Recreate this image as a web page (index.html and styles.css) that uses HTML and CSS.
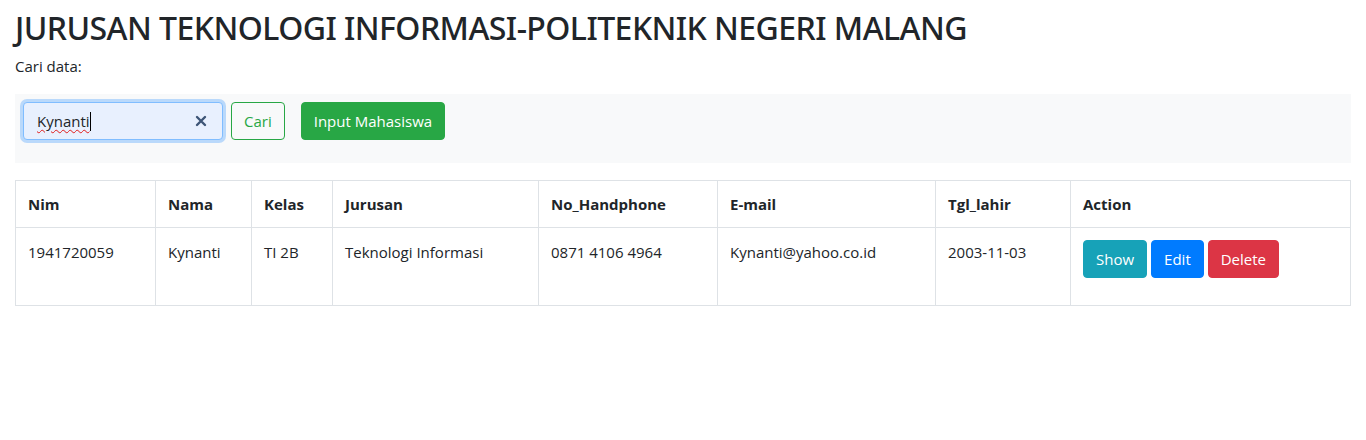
FILE: index.html
```html
<!DOCTYPE html>
<html lang="id">
<head>
<meta charset="utf-8">
<title>Mahasiswa</title>
<link rel="stylesheet" href="styles.css">
</head>
<body>
<div class="container">
  <h2 class="title">JURUSAN TEKNOLOGI INFORMASI-POLITEKNIK NEGERI MALANG</h2>
  <p class="label">Cari data:</p>
  <div class="toolbar">
    <form class="search-form">
      <div class="search-input">
        <span class="typed">Kynanti</span><span class="caret"></span>
        <svg class="clear" width="12" height="12" viewBox="0 0 12 12"><path d="M2 2 L10 10 M10 2 L2 10" stroke="#3d5577" stroke-width="2.4" stroke-linecap="round"/></svg>
      </div>
      <button type="button" class="btn btn-outline-success">Cari</button>
    </form>
    <button type="button" class="btn btn-success">Input Mahasiswa</button>
  </div>
  <table class="data-table">
    <colgroup>
      <col class="c-nim"><col class="c-nama"><col class="c-kelas"><col class="c-jurusan"><col class="c-hp"><col class="c-email"><col class="c-tgl"><col class="c-action">
    </colgroup>
    <thead>
      <tr><th>Nim</th><th>Nama</th><th>Kelas</th><th>Jurusan</th><th>No_Handphone</th><th>E-mail</th><th>Tgl_lahir</th><th>Action</th></tr>
    </thead>
    <tbody>
      <tr>
        <td>1941720059</td><td>Kynanti</td><td>TI 2B</td><td>Teknologi Informasi</td><td>0871 4106 4964</td><td>Kynanti@yahoo.co.id</td><td>2003-11-03</td>
        <td>
          <form class="actions">
            <button type="button" class="btn btn-info">Show</button>
            <button type="button" class="btn btn-primary">Edit</button>
            <button type="button" class="btn btn-danger">Delete</button>
          </form>
        </td>
      </tr>
    </tbody>
  </table>
</div>
</body>
</html>
```
FILE: styles.css
```css
* { box-sizing: border-box; }
body {
  margin: 0;
  font-family: "Open Sans", "Noto Sans", sans-serif;
  font-size: 15px;
  line-height: 24px;
  color: #212529;
  background: #fff;
}
.container { padding: 0 15px; }
.title {
  margin: 9px 0 0;
  font-family: "Noto Sans", "Open Sans", sans-serif;
  font-size: 32px;
  font-weight: 500;
  letter-spacing: -0.55px;
  line-height: 38px;
}
.label { margin: 7px 0 16px; }
.toolbar {
  background: #f8f9fa;
  padding: 8px;
  display: flex;
  align-items: flex-start;
  gap: 16px;
}
.search-form {
  display: flex;
  gap: 8px;
  margin-bottom: 15px;
}
.search-input {
  width: 200px;
  height: 38px;
  border: 1px solid #80bdff;
  border-radius: 4px;
  background: #e8f0fe;
  box-shadow: 0 0 0 3px rgba(0,123,255,.25);
  display: flex;
  align-items: center;
  padding: 0 12px 0 13px;
}
.typed {
  text-decoration: underline wavy #e01b1b;
  text-decoration-thickness: 1px;
  text-underline-offset: 2px;
}
.caret { width: 1px; height: 19px; background: #000; }
.clear { margin-left: auto; margin-right: 3px; }
.btn {
  font-family: inherit;
  font-size: 15px;
  line-height: 24px;
  padding: 6px 12px;
  border: 1px solid transparent;
  border-radius: 4px;
  color: #fff;
  cursor: pointer;
}
.btn-outline-success { background: transparent; color: #28a745; border-color: #28a745; }
.btn-success { background: #28a745; border-color: #28a745; }
.btn-info { background: #17a2b8; border-color: #17a2b8; }
.btn-primary { background: #007bff; border-color: #007bff; }
.btn-danger { background: #dc3545; border-color: #dc3545; }
.data-table {
  width: 100%;
  margin-top: 17px;
  border-collapse: collapse;
  table-layout: fixed;
}
.data-table th, .data-table td {
  border: 1px solid #dee2e6;
  padding: 12px 12px 11px;
  text-align: left;
  vertical-align: top;
}
.data-table th { font-weight: 700; padding: 11px 12px 11px; }
.actions { display: flex; gap: 4px; margin-bottom: 16px; }
.c-nim { width: 140px; }
.c-nama { width: 96px; }
.c-kelas { width: 81px; }
.c-jurusan { width: 206px; }
.c-hp { width: 179px; }
.c-email { width: 218px; }
.c-tgl { width: 135px; }
```
